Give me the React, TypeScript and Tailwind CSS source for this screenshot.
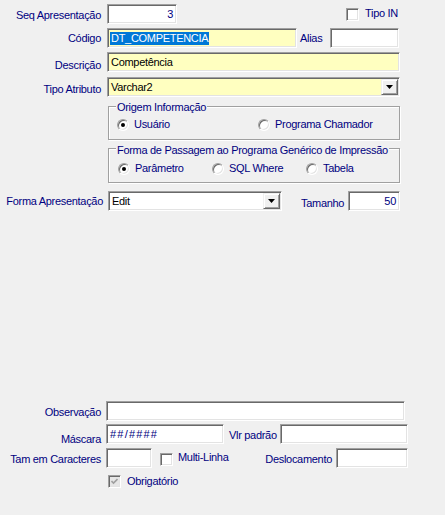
import React from 'react';

const sunken =
  'border border-t-[#a0a0a0] border-l-[#a0a0a0] border-r-white border-b-white shadow-[inset_1px_1px_0_#696969,inset_-1px_-1px_0_#e3e3e3]';

function Label({ text, width = 'w-[101px]', offset = 'mt-[4px]' }: { text: string; width?: string; offset?: string }) {
  return <span className={`${width} ${offset} shrink-0 text-right leading-[13px] whitespace-nowrap`}>{text}</span>;
}

function Edit({
  width,
  value,
  yellow,
  right,
  selected,
  className = '',
}: {
  width: string;
  value?: string;
  yellow?: boolean;
  right?: boolean;
  selected?: boolean;
  className?: string;
}) {
  return (
    <div
      className={`${width} ${sunken} ${yellow ? 'bg-[#ffffc0]' : 'bg-white'} ${
        right ? 'text-right pr-[3px]' : 'pl-[2px]'
      } h-[20px] shrink-0 pt-[3px] leading-[13px] whitespace-nowrap overflow-hidden ${className}`}
    >
      {selected ? (
        <span className="inline-block bg-[#0078d7] pl-[1px] pr-px text-white">{value}</span>
      ) : (
        <span className={right ? '' : 'pl-[1px]'}>{value}</span>
      )}
    </div>
  );
}

function Combo({ width, value, yellow }: { width: string; value: string; yellow?: boolean }) {
  return (
    <div
      className={`${width} ${sunken} ${yellow ? 'bg-[#ffffc0]' : 'bg-white'} h-[20px] shrink-0 flex items-stretch pl-[2px] pr-[1px] py-[1px]`}
    >
      <span className="flex-1 pl-[1px] pt-[2px] leading-[13px] text-black">{value}</span>
      <div className="w-[17px] bg-[#f0f0f0] border border-t-[#f0f0f0] border-l-[#f0f0f0] border-r-[#696969] border-b-[#696969] shadow-[inset_1px_1px_0_#fff,inset_-1px_-1px_0_#a0a0a0] flex items-center justify-center">
        <svg width="7" height="4" viewBox="0 0 7 4">
          <polygon points="0,0 7,0 3.5,4" fill="#000" />
        </svg>
      </div>
    </div>
  );
}

function Check({ checked, disabled, className = '' }: { checked?: boolean; disabled?: boolean; className?: string }) {
  return (
    <div
      className={`w-[13px] h-[13px] shrink-0 ${sunken} ${disabled ? 'bg-[#e6e6e6]' : 'bg-white'} flex items-center justify-center ${className}`}
    >
      {checked && (
        <svg width="7" height="7" viewBox="0 0 7 7">
          <polyline points="0.5,3 2.5,5 6.5,1" fill="none" stroke={disabled ? '#a0a0a0' : '#000'} strokeWidth="1.6" />
        </svg>
      )}
    </div>
  );
}

function Radio({ label, checked, width }: { label: string; checked?: boolean; width: string }) {
  return (
    <div className={`${width} flex items-center h-[13px] shrink-0`}>
      <div className="w-[12px] h-[12px] rounded-full border border-t-[#a0a0a0] border-l-[#a0a0a0] border-r-white border-b-white shadow-[inset_1px_1px_0_#696969,inset_-1px_-1px_0_#e3e3e3] bg-white flex items-center justify-center">
        {checked && <div className="w-[4px] h-[4px] rounded-full bg-black" />}
      </div>
      <span className="ml-[5px] leading-[13px] whitespace-nowrap">{label}</span>
    </div>
  );
}

function Group({
  title,
  height,
  titleOffset,
  rowOffset,
  children,
}: {
  title: string;
  height: string;
  titleOffset: string;
  rowOffset: string;
  children: React.ReactNode;
}) {
  return (
    <div
      className={`ml-[108px] w-[292px] ${height} border border-[#a0a0a0] shadow-[inset_1px_1px_0_#fff,1px_1px_0_#fff]`}
    >
      <div className={`${titleOffset} ml-[7px] w-fit px-px bg-[#f0f0f0] leading-[13px] whitespace-nowrap`}>{title}</div>
      <div className={`flex ${rowOffset}`}>{children}</div>
    </div>
  );
}

export default function App() {
  return (
    <div className="w-[445px] h-[515px] overflow-hidden bg-[#f0f0f0] pt-[4px] font-['Liberation_Sans',Arial,sans-serif] text-[11px] tracking-[-0.3px] text-[#000080]">
      {/* Seq / Tipo IN */}
      <div className="flex items-start h-[20px]">
        <Label text="Seq Apresentação" offset="mt-[5px]" />
        <Edit width="w-[70px] ml-[6px]" value="3" right />
        <Check className="ml-[169px] mt-[4px]" />
        <span className="ml-[6px] mt-[3px] leading-[13px]">Tipo IN</span>
      </div>

      {/* Código / Alias */}
      <div className="flex items-start h-[20px] mt-[4px]">
        <Label text="Código" />
        <Edit width="w-[190px] ml-[6px]" value="DT_COMPETENCIA" yellow selected />
        <span className="ml-[3px] w-[30px] mt-[4px] leading-[13px]">Alias</span>
        <Edit width="w-[69px]" />
      </div>

      <div className="flex items-start h-[20px] mt-[4px]">
        <Label text="Descrição" offset="mt-[7px]" />
        <Edit width="w-[293px] ml-[6px] text-black" value="Competência" yellow />
      </div>

      <div className="flex items-start h-[20px] mt-[5px]">
        <Label text="Tipo Atributo" offset="mt-[6px]" />
        <div className="ml-[6px]">
          <Combo width="w-[293px]" value="Varchar2" yellow />
        </div>
      </div>

      <div className="mt-[9px]">
        <Group title="Origem Informação" height="h-[34px]" titleOffset="-mt-[6px]" rowOffset="mt-[4px] ml-[8px]">
          <Radio label="Usuário" checked width="w-[141px]" />
          <Radio label="Programa Chamador" width="w-[130px]" />
        </Group>
      </div>

      <div className="mt-[8px]">
        <Group
          title="Forma de Passagem ao Programa Genérico de Impressão"
          height="h-[35px]"
          titleOffset="-mt-[5px]"
          rowOffset="mt-[5px] ml-[9px]"
        >
          <Radio label="Parâmetro" checked width="w-[94px]" />
          <Radio label="SQL Where" width="w-[94px]" />
          <Radio label="Tabela" width="w-[80px]" />
        </Group>
      </div>

      <div className="flex items-start h-[20px] mt-[8px]">
        <Label text="Forma Apresentação" width="w-[103px]" />
        <div className="ml-[5px]">
          <Combo width="w-[174px]" value="Edit" />
        </div>
        <span className="ml-[19px] w-[47px] mt-[6px] leading-[13px]">Tamanho</span>
        <Edit width="w-[52px]" value="50" right />
      </div>

      {/* bottom block */}
      <div className="flex items-start h-[20px] mt-[190px]">
        <Label text="Observação" offset="mt-[5px]" />
        <Edit width="w-[299px] ml-[5px]" />
      </div>

      <div className="flex items-start h-[20px] mt-[3px]">
        <Label text="Máscara" offset="mt-[9px]" />
        <Edit width="w-[118px] ml-[5px] tracking-[1.2px]" value="##/####" />
        <span className="ml-[5px] w-[51px] mt-[5px] leading-[13px] whitespace-nowrap">Vlr padrão</span>
        <Edit width="w-[128px]" />
      </div>

      <div className="flex items-start h-[20px] mt-[4px] w-[408px]">
        <Label text="Tam em Caracteres" offset="mt-[5px]" />
        <Edit width="w-[46px] ml-[5px]" />
        <Check className="ml-[8px] mt-[5px]" />
        <span className="ml-[5px] mt-[3px] leading-[13px]">Multi-Linha</span>
        <span className="ml-auto mr-[4px] mt-[5px] leading-[13px]">Deslocamento</span>
        <Edit width="w-[72px]" />
      </div>

      <div className="flex items-start mt-[7px]">
        <Check className="ml-[108px]" checked disabled />
        <span className="ml-[6px] leading-[13px]">Obrigatório</span>
      </div>
    </div>
  );
}
